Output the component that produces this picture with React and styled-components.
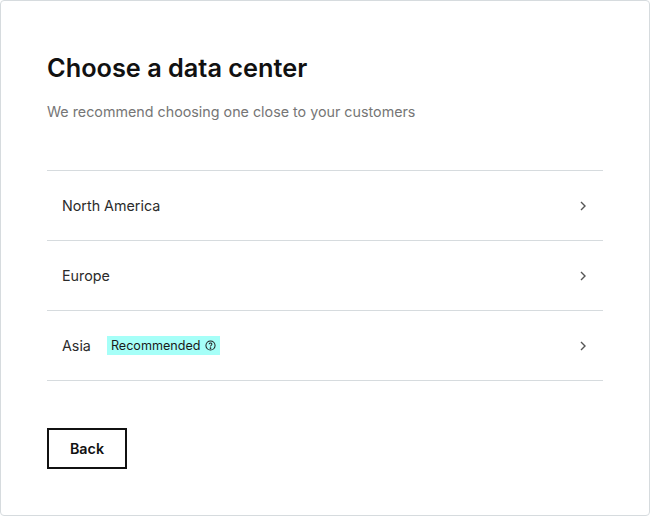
import styled, { createGlobalStyle } from "styled-components";

const Global = createGlobalStyle`
  body { margin: 0; font-family: Inter, "Noto Sans", sans-serif; background: #fff; }
`;

const Card = styled.div`
  box-sizing: border-box;
  width: 650px;
  height: 516px;
  border: 1px solid #d6dbde;
  border-radius: 4px;
  padding: 50px 46px 0 46px;
`;

const Title = styled.h1`
  margin: 0;
  font-size: 25.3px;
  font-weight: 600;
  color: #111;
  line-height: 34px;
`;

const Sub = styled.p`
  margin: 17px 0 0;
  font-size: 14.3px;
  color: #767676;
  line-height: 20px;
`;

const List = styled.div`
  margin-top: 48px;
  border-top: 1px solid #d6dbde;
`;

const Row = styled.div`
  display: flex;
  align-items: center;
  height: 69px;
  padding: 0 16px 0 15px;
  border-bottom: 1px solid #d6dbde;
  font-size: 14.3px;
  color: #2b2b2b;
`;

const Name = styled.span`
  flex: 0 0 auto;
`;

const Badge = styled.span`
  display: inline-flex;
  align-items: center;
  gap: 4px;
  margin-left: 16px;
  padding: 2px 4px;
  background: #a6fff8;
  font-size: 12.6px;
  color: #1a1a1a;
`;

const Chev = styled.svg`
  margin-left: auto;
`;

const Back = styled.button`
  margin-top: 47px;
  width: 80px;
  height: 41px;
  border: 2px solid #111;
  background: #fff;
  font-family: inherit;
  font-size: 14.3px;
  font-weight: 600;
  color: #111;
`;

const rows = [
  { name: "North America" },
  { name: "Europe" },
  { name: "Asia", rec: true },
];

export default function App() {
  return (
    <>
      <Global />
      <Card>
        <Title>Choose a data center</Title>
        <Sub>We recommend choosing one close to your customers</Sub>
        <List>
          {rows.map((r) => (
            <Row key={r.name}>
              <Name>{r.name}</Name>
              {r.rec && (
                <Badge>
                  Recommended
                  <svg width="11" height="11" viewBox="0 0 12 12" fill="none" stroke="#222" strokeWidth="1.1">
                    <circle cx="6" cy="6" r="5" />
                    <path d="M4.5 4.7a1.5 1.5 0 1 1 2 1.4c-.4.2-.5.5-.5.9" />
                    <circle cx="6" cy="8.8" r=".4" fill="#222" />
                  </svg>
                </Badge>
              )}
              <Chev width="8" height="12" viewBox="0 0 8 12" fill="none" stroke="#555" strokeWidth="1.4">
                <path d="M2 2l4 4-4 4" />
              </Chev>
            </Row>
          ))}
        </List>
        <Back>Back</Back>
      </Card>
    </>
  );
}
